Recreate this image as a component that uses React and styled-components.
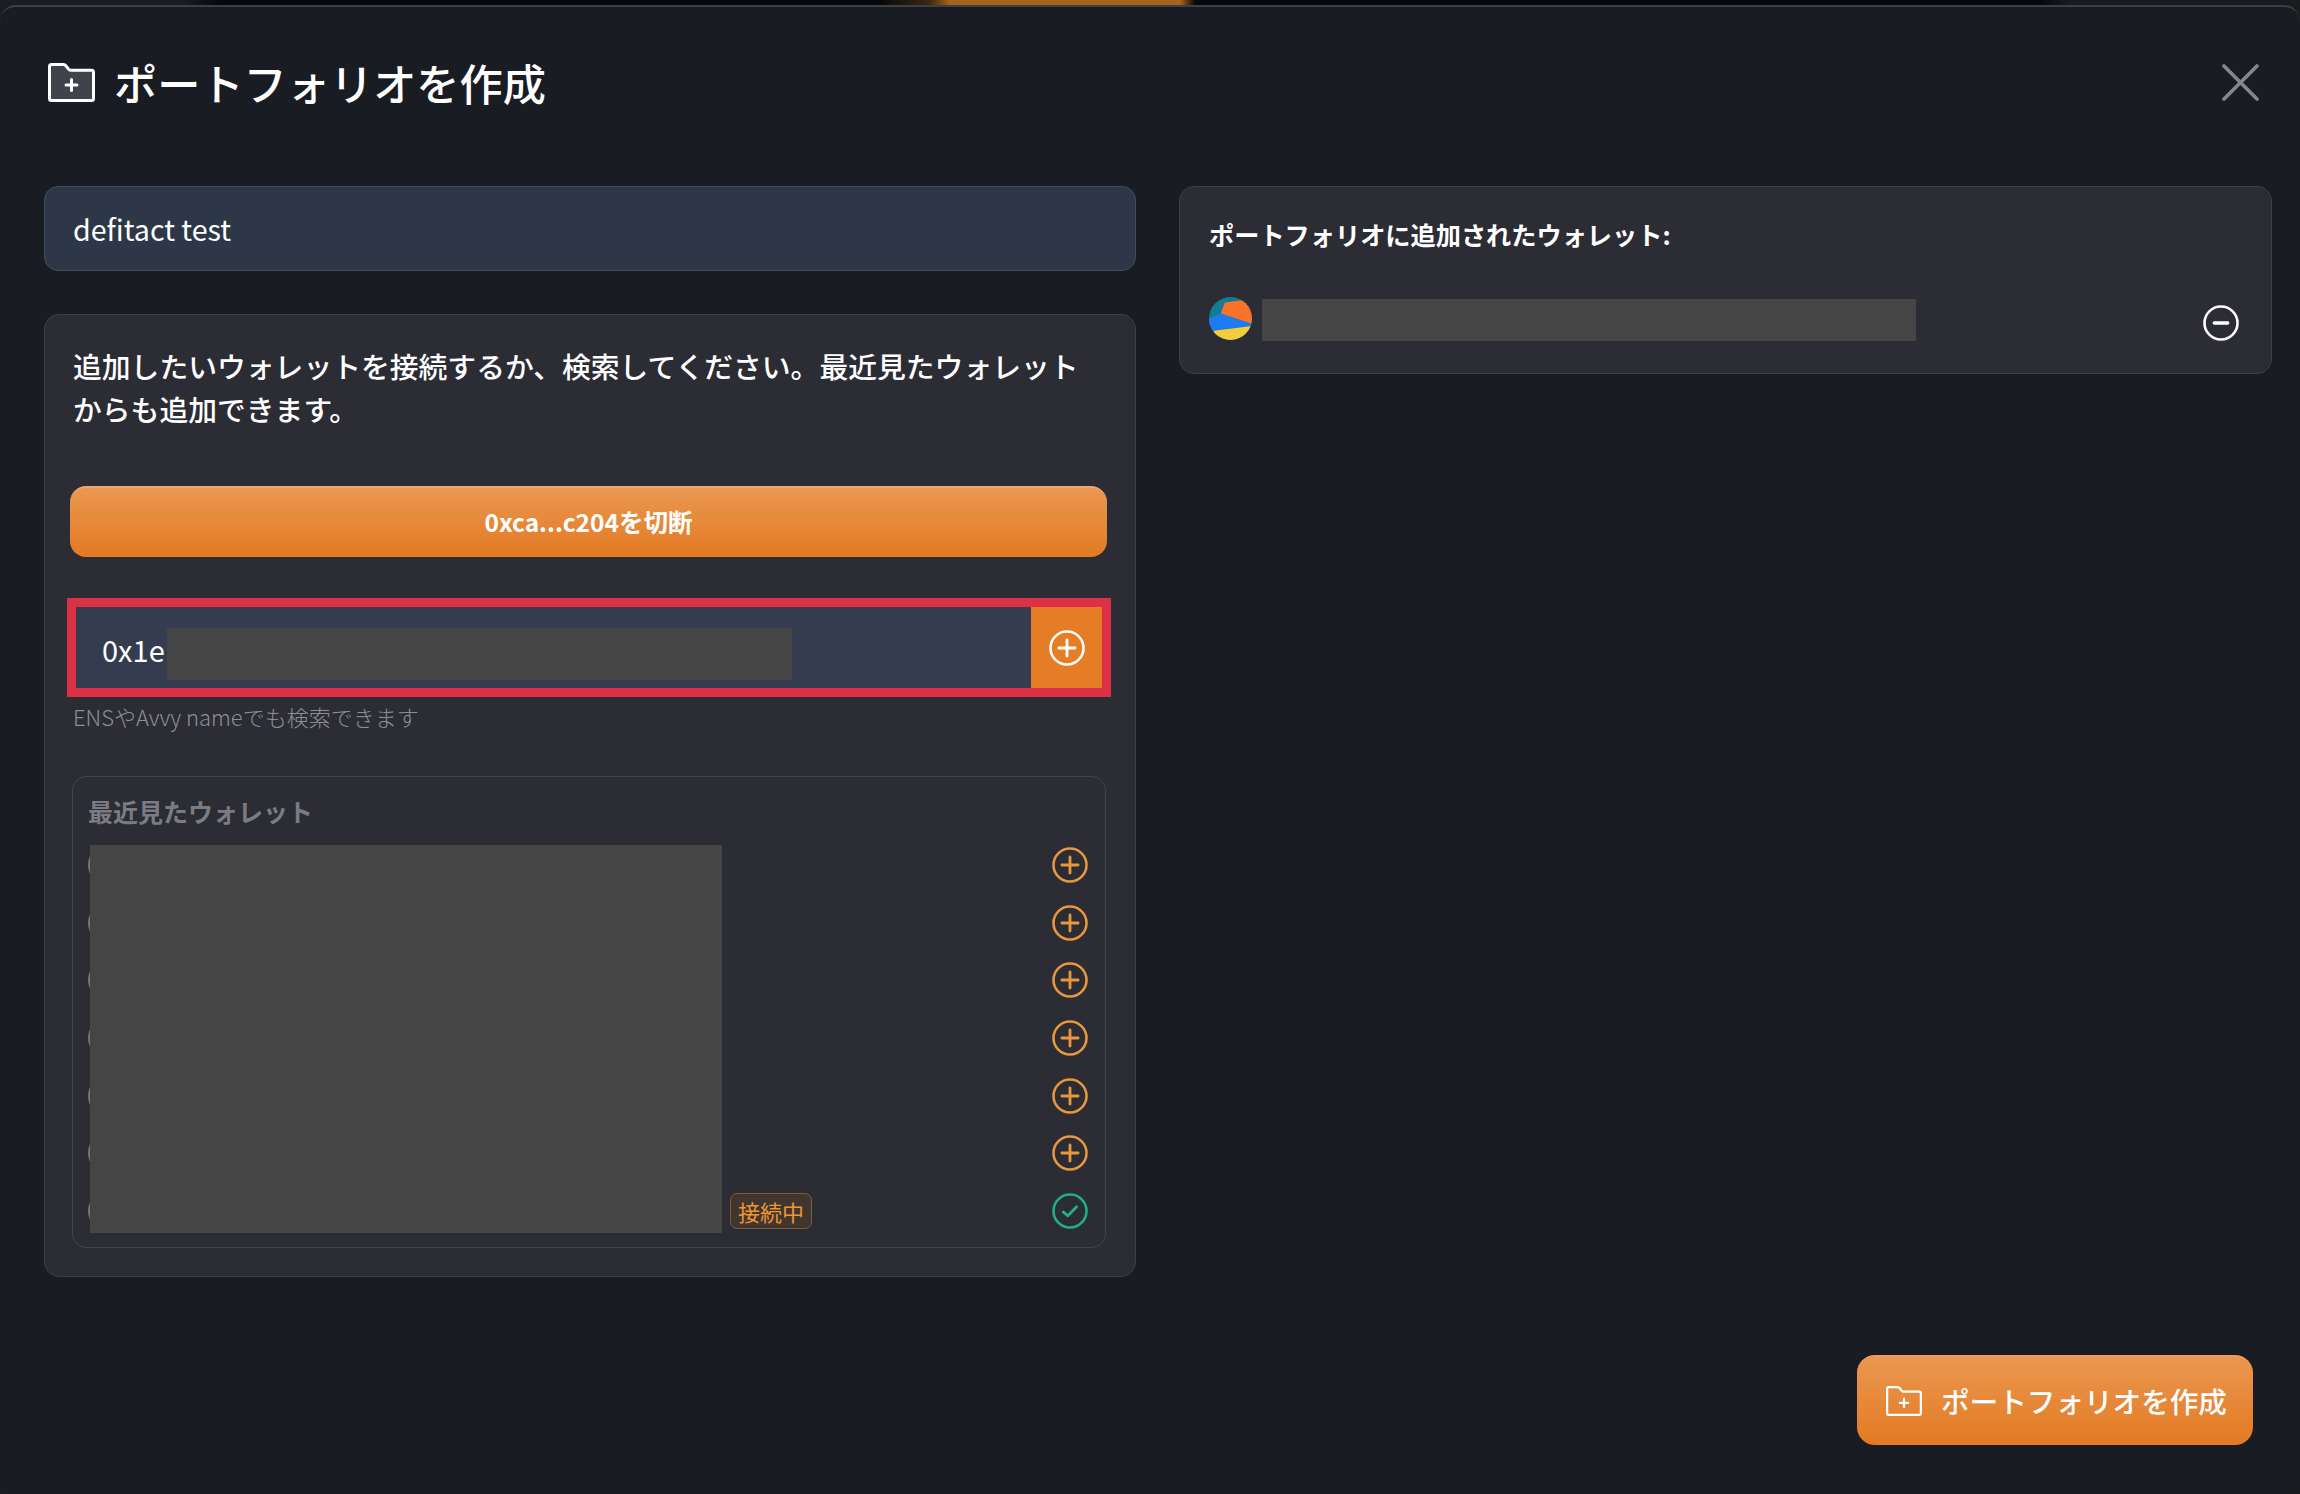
import React from "react";
import styled, { createGlobalStyle } from "styled-components";

const Global = createGlobalStyle`
  html, body { margin: 0; padding: 0; background: #07080b; }
  body { font-family: "Noto Sans CJK JP", "Noto Sans", sans-serif; }
  * { box-sizing: border-box; }
`;

const Backdrop = styled.div`
  width: 2300px;
  height: 1494px;
  padding-top: 5px;
  overflow: hidden;
  background: linear-gradient(
    90deg,
    #1c1d20 0,
    #1c1d20 180px,
    #07080b 220px,
    #07080b 880px,
    #3a2a14 930px,
    #a8641f 950px,
    #a8641f 1180px,
    #07080b 1195px,
    #07080b 2040px,
    #1a1b1e 2070px,
    #1a1b1e 2300px
  );
`;

const Modal = styled.div`
  height: 1489px;
  display: flex;
  flex-direction: column;
  background: #191c23;
  border-top: 2px solid #3d3f45;
  border-radius: 16px;
`;

const Header = styled.header`
  height: 150px;
  flex: none;
  margin-bottom: 29px;
  padding: 0 41px 0 48px;
  display: flex;
  align-items: center;
`;

const HeaderIcon = styled.span`
  display: block;
  color: #ffffff;
`;

const Title = styled.h1`
  margin: 0 0 0 19px;
  flex: 1;
  font-size: 43.2px;
  line-height: 60px;
  font-weight: 500;
  color: #ffffff;
`;

const CloseButton = styled.button`
  padding: 0;
  width: 37px;
  height: 37px;
  display: block;
  background: none;
  border: 0;
  color: #85878b;
`;

const Columns = styled.main`
  display: grid;
  grid-template-columns: 1092px 1093px;
  column-gap: 43px;
  padding: 0 28px 0 44px;
  align-items: start;
`;

const LeftColumn = styled.section`
  display: flex;
  flex-direction: column;
  gap: 43px;
`;

const NameInput = styled.input`
  display: block;
  width: 100%;
  height: 85px;
  padding: 0 28px;
  background: #2d3748;
  border: 1px solid #434c5b;
  border-radius: 14px;
  color: #ffffff;
  font: 400 28.6px/1 "Noto Sans CJK JP", "Noto Sans", sans-serif;
  outline: none;
`;

const Panel = styled.div`
  background: #2b2c34;
  border: 1px solid #3d3e48;
  border-radius: 15px;
`;

const AddPanel = styled(Panel)`
  height: 963px;
  padding: 29px 28px 29px 25px;
`;

const Description = styled.p`
  margin: 0 0 0 3px;
  font-size: 28.8px;
  line-height: 43px;
  font-weight: 500;
  color: #ffffff;
`;

const DisconnectButton = styled.button`
  display: block;
  width: 100%;
  height: 71px;
  margin-top: 56px;
  border: 0;
  border-top: 2px solid #f0a872;
  border-radius: 16px;
  background: linear-gradient(180deg, #ea9750 0%, #e37a22 100%);
  color: #ffffff;
  font: 700 24.5px/1 "Noto Sans CJK JP", "Noto Sans", sans-serif;
`;

const AddressBar = styled.div`
  position: relative;
  height: 81px;
  margin: 50px 5px 0 6px;
  display: flex;
  background: #353c50;
  outline: 9px solid #dc3045;
`;

const AddressInput = styled.input`
  flex: 1;
  min-width: 0;
  height: 100%;
  padding: 2px 0 0 26px;
  background: transparent;
  border: 0;
  outline: none;
  color: #ffffff;
  font: 400 29px/1 "Noto Sans CJK JP", "Noto Sans", sans-serif;
`;

const AddressAdd = styled.button`
  width: 71px;
  flex: none;
  padding: 0;
  border: 0;
  display: flex;
  align-items: center;
  justify-content: center;
  background: #e47d25;
  color: #ffffff;
`;

const Redaction = styled.div`
  position: absolute;
  background: #454545;
`;

const AddressRedaction = styled(Redaction)`
  left: 91px;
  top: 21px;
  width: 625px;
  height: 52px;
`;

const Hint = styled.div`
  margin: 12px 0 0 3px;
  font-size: 22px;
  line-height: 32px;
  font-weight: 300;
  color: #8d8f94;
`;

const RecentBox = styled.div`
  height: 472px;
  margin: 44px 1px 0 2px;
  padding: 16px 17px 0 15px;
  border: 1px solid #41434d;
  border-radius: 14px;
`;

const RecentTitle = styled.h3`
  margin: 0;
  font-size: 25px;
  line-height: 36px;
  font-weight: 700;
  color: #7b7c83;
`;

const RecentList = styled.ul`
  position: relative;
  list-style: none;
  margin: 7px 0 0;
  padding: 0;
`;

const RecentRedaction = styled(Redaction)`
  left: 2px;
  top: 9px;
  width: 632px;
  height: 388px;
`;

const RecentRow = styled.li`
  height: 57.7px;
  display: flex;
  align-items: center;
`;

const RowDot = styled.span`
  width: 40px;
  height: 40px;
  flex: none;
  border-radius: 50%;
  background: #74757c;
`;

const ConnectedBadge = styled.span`
  margin-left: 602px;
  height: 36px;
  padding: 0 7px;
  display: inline-flex;
  align-items: center;
  background: #40352f;
  border: 1px solid #7c5c3d;
  border-radius: 7px;
  color: #ee9536;
  font-size: 22px;
  line-height: 1;
  font-weight: 400;
`;

const RowAction = styled.button`
  margin-left: auto;
  padding: 0;
  border: 0;
  background: none;
  display: block;
  height: 36px;
  color: ${(p) => (p.$done ? "#1fb186" : "#e8973e")};
`;

const AddedPanel = styled(Panel)`
  height: 188px;
  padding: 29px 32px 0 29px;
`;

const AddedTitle = styled.h3`
  margin: 0;
  font-size: 25.2px;
  line-height: 36px;
  font-weight: 700;
  color: #ffffff;
`;

const AddedRow = styled.div`
  position: relative;
  margin-top: 45px;
  display: flex;
  align-items: flex-start;
`;

const Avatar = styled.svg`
  display: block;
  flex: none;
  width: 43px;
  height: 43px;
  border-radius: 50%;
`;

const AddedRedaction = styled(Redaction)`
  left: 53px;
  top: 2px;
  width: 654px;
  height: 42px;
`;

const RemoveButton = styled.button`
  margin: 8px 0 0 auto;
  padding: 0;
  border: 0;
  background: none;
  display: block;
  height: 36px;
  color: #ffffff;
`;

const Footer = styled.footer`
  margin-top: auto;
  padding: 0 47px 49px 0;
  display: flex;
  justify-content: flex-end;
`;

const CreateButton = styled.button`
  width: 396px;
  height: 90px;
  padding: 0 0 0 29px;
  display: flex;
  align-items: center;
  gap: 19px;
  border: 0;
  border-top: 2px solid #ee9c5a;
  border-radius: 18px;
  background: linear-gradient(180deg, #ea9750 0%, #e37a22 100%);
  color: #ffffff;
  font: 500 28.6px/1 "Noto Sans CJK JP", "Noto Sans", sans-serif;
`;

const FolderGlyph = styled.svg`
  display: block;
  flex: none;
`;

const FolderPlus = ({ width, height, fill = "none", sw = 2.6 }) => (
  <FolderGlyph width={width} height={height} viewBox="0 0 47 39" fill="none">
    <path
      d="M3.5 1.5H15.5C16.6 1.5 17.4 2 18 2.9L20.6 6.2C21.1 6.9 21.8 7.2 22.7 7.2H43.5C44.6 7.2 45.5 8.1 45.5 9.2V35.5C45.5 36.6 44.6 37.5 43.5 37.5H3.5C2.4 37.5 1.5 36.6 1.5 35.5V3.5C1.5 2.4 2.4 1.5 3.5 1.5Z"
      fill={fill}
      stroke="currentColor"
      strokeWidth={sw}
      strokeLinejoin="round"
    />
    <path d="M23.5 16.5V27.5M18 22H29" stroke="currentColor" strokeWidth={sw} strokeLinecap="round" />
  </FolderGlyph>
);

const RingGlyph = styled.svg`
  display: block;
`;

const Ring = ({ children }) => (
  <RingGlyph width="36" height="36" viewBox="0 0 24 24" fill="none" stroke="currentColor" strokeWidth="1.7" strokeLinecap="round" strokeLinejoin="round">
    <circle cx="12" cy="12" r="11" />
    {children}
  </RingGlyph>
);

const PlusRing = () => (
  <Ring>
    <path d="M6.6 12H17.4M12 6.6V17.4" strokeWidth="1.9" />
  </Ring>
);
const MinusRing = () => (
  <Ring>
    <path d="M7.5 12H16.5" strokeWidth="2.2" />
  </Ring>
);
const CheckRing = () => (
  <Ring>
    <path d="M7.5 12.6L10.6 15.2L16.4 9.2" strokeWidth="1.9" />
  </Ring>
);

const CloseGlyph = styled.svg`
  display: block;
`;

const rows = [0, 1, 2, 3, 4, 5, 6];

export default function App() {
  return (
    <Backdrop>
      <Global />
      <Modal>
        <Header>
          <HeaderIcon>
            <FolderPlus width={47} height={39} fill="#40444a" sw={3} />
          </HeaderIcon>
          <Title>ポートフォリオを作成</Title>
          <CloseButton aria-label="close">
            <CloseGlyph width="37" height="37" viewBox="0 0 37 37" fill="none" stroke="currentColor" strokeWidth="3.6" strokeLinecap="round">
              <path d="M2 2L35 35M35 2L2 35" />
            </CloseGlyph>
          </CloseButton>
        </Header>

        <Columns>
          <LeftColumn>
            <NameInput value="defitact test" readOnly />
            <AddPanel>
              <Description>
                追加したいウォレットを接続するか、検索してください。最近見たウォレットからも追加できます。
              </Description>
              <DisconnectButton>0xca...c204を切断</DisconnectButton>
              <AddressBar>
                <AddressInput value="0x1e" readOnly />
                <AddressRedaction />
                <AddressAdd aria-label="add">
                  <PlusRing />
                </AddressAdd>
              </AddressBar>
              <Hint>ENSやAvvy nameでも検索できます</Hint>
              <RecentBox>
                <RecentTitle>最近見たウォレット</RecentTitle>
                <RecentList>
                  {rows.map((r) => (
                    <RecentRow key={r}>
                      <RowDot />
                      {r === 6 && <ConnectedBadge>接続中</ConnectedBadge>}
                      <RowAction $done={r === 6} aria-label={r === 6 ? "added" : "add"}>
                        {r === 6 ? <CheckRing /> : <PlusRing />}
                      </RowAction>
                    </RecentRow>
                  ))}
                  <RecentRedaction />
                </RecentList>
              </RecentBox>
            </AddPanel>
          </LeftColumn>

          <AddedPanel>
            <AddedTitle>ポートフォリオに追加されたウォレット:</AddedTitle>
            <AddedRow>
              <Avatar viewBox="0 0 130 130">
                <rect width="130" height="130" fill="#147b95" />
                <polygon points="35,50 48,17 110,8 135,40 130,82" fill="#f9722a" />
                <polygon points="0,65 35,50 130,82 130,88 14,102 0,100" fill="#1d7bf2" />
                <polygon points="14,102 130,88 130,130 0,130" fill="#f2cd3c" />
              </Avatar>
              <AddedRedaction />
              <RemoveButton aria-label="remove">
                <MinusRing />
              </RemoveButton>
            </AddedRow>
          </AddedPanel>
        </Columns>

        <Footer>
          <CreateButton>
            <FolderPlus width={36} height={30} sw={2.9} />
            ポートフォリオを作成
          </CreateButton>
        </Footer>
      </Modal>
    </Backdrop>
  );
}
